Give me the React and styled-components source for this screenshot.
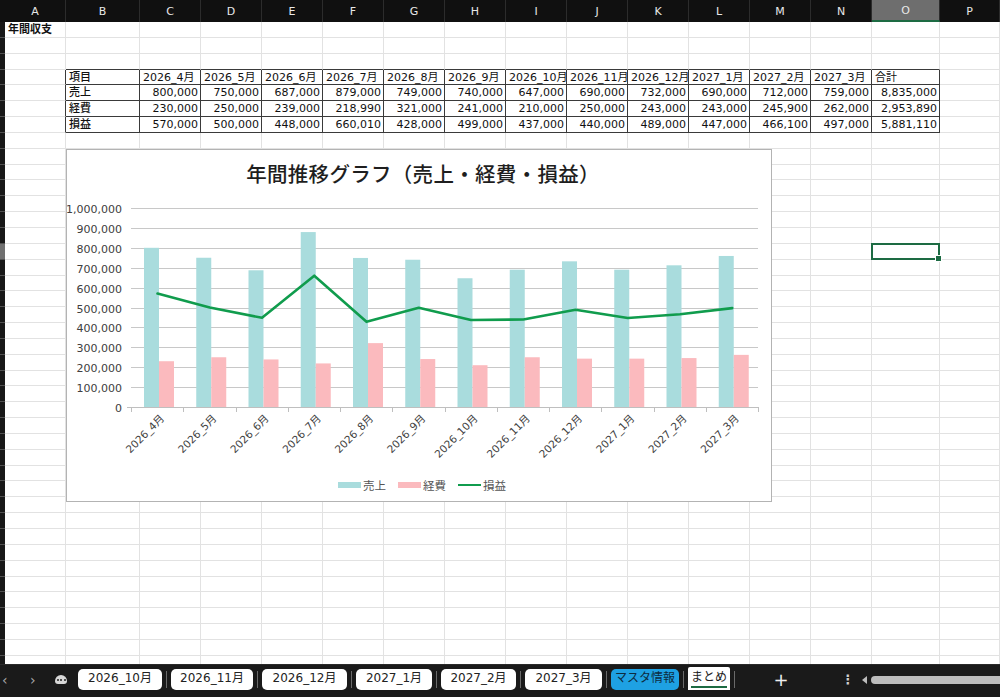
import React from 'react';
import styled, { createGlobalStyle } from 'styled-components';

const GlobalStyle = createGlobalStyle`
  html, body { margin: 0; padding: 0; background: #fff; }
  body { font-family: "DejaVu Sans", "Noto Sans CJK JP", sans-serif; }
  #root { width: 1000px; height: 697px; }
`;

const FONT = `"DejaVu Sans", "Noto Sans CJK JP", sans-serif`;
const JFONT = `"Noto Sans CJK JP", "DejaVu Sans", sans-serif`;

const COLS = ['A', 'B', 'C', 'D', 'E', 'F', 'G', 'H', 'I', 'J', 'K', 'L', 'M', 'N', 'O', 'P'];
const COL_W = [61, 74, 61, 61, 61, 61, 61, 61, 61, 61, 61, 61, 61, 61, 68, 60];
const ROW_H = 15.85;
const ROWS = 41;
const ACTIVE_COL = 14;
const ACTIVE_ROW = 14;

const months = ['2026_4月', '2026_5月', '2026_6月', '2026_7月', '2026_8月', '2026_9月', '2026_10月', '2026_11月', '2026_12月', '2027_1月', '2027_2月', '2027_3月'];
const sales = [800000, 750000, 687000, 879000, 749000, 740000, 647000, 690000, 732000, 690000, 712000, 759000];
const costs = [230000, 250000, 239000, 218990, 321000, 241000, 210000, 250000, 243000, 243000, 245900, 262000];
const profit = [570000, 500000, 448000, 660010, 428000, 499000, 437000, 440000, 489000, 447000, 466100, 497000];
const fmt = (n) => n.toLocaleString('en-US');
const sum = (a) => a.reduce((s, v) => s + v, 0);

const tableRows = [
  { label: '項目', values: [...months, '合計'], header: true },
  { label: '売上', values: [...sales.map(fmt), fmt(sum(sales))] },
  { label: '経費', values: [...costs.map(fmt), fmt(sum(costs))] },
  { label: '損益', values: [...profit.map(fmt), fmt(sum(profit))] },
];

/* ---------- layout ---------- */
const Page = styled.div`
  width: 1000px;
  height: 697px;
  display: flex;
  flex-direction: column;
  overflow: hidden;
  background: #fff;
`;

const HeaderBar = styled.div`
  display: flex;
  height: 22px;
  flex-shrink: 0;
  background: #101010;
`;

const Corner = styled.div`
  width: 5px;
  flex-shrink: 0;
  background: #101010;
`;

const ColHead = styled.div`
  width: ${(p) => p.$w}px;
  flex-shrink: 0;
  box-sizing: border-box;
  display: flex;
  align-items: center;
  justify-content: center;
  color: #e8e8e8;
  font: 11px ${FONT};
  border-right: 1px solid #2c2c2c;
  background: ${(p) => (p.$active ? '#6e6e6e' : 'transparent')};
  border-bottom: ${(p) => (p.$active ? '2px solid #1d6b43' : 'none')};
`;

const Body = styled.div`
  flex: 1;
  display: flex;
  overflow: hidden;
  border-bottom: 1px solid #2a2a2a;
`;

const RowHeads = styled.div`
  width: 5px;
  flex-shrink: 0;
  display: grid;
  grid-auto-rows: ${ROW_H}px;
  background: #181818;
`;

const RowHead = styled.div`
  box-sizing: border-box;
  border-bottom: 1px solid #505050;
  background: ${(p) => (p.$active ? '#707070' : 'transparent')};
`;

const SheetArea = styled.div`
  position: relative;
  flex: 1;
  overflow: hidden;
`;

const Grid = styled.div`
  display: grid;
  grid-template-columns: ${COL_W.map((w) => `${w}px`).join(' ')};
  grid-auto-rows: ${ROW_H}px;
`;

const Cell = styled.div`
  box-sizing: border-box;
  border-right: 1px solid ${(p) => (p.$darkRight ? '#3a3a3a' : '#e2e2e2')};
  border-bottom: 1px solid ${(p) => (p.$darkBottom ? '#3a3a3a' : '#e2e2e2')};
  padding: 0 2px 0 3px;
  font: ${(p) => (p.$weight || 400)} 11px ${FONT};
  line-height: 15px;
  color: #111;
  text-align: ${(p) => p.$align || 'left'};
  white-space: nowrap;
  overflow: hidden;
`;

const Selection = styled.div`
  position: absolute;
  left: ${(p) => p.$left}px;
  top: ${(p) => p.$top}px;
  width: ${(p) => p.$w}px;
  height: ${(p) => p.$h}px;
  box-sizing: border-box;
  border: 2px solid #1d6b43;
  pointer-events: none;
`;

const Handle = styled.div`
  position: absolute;
  right: -4px;
  bottom: -4px;
  width: 5px;
  height: 5px;
  background: #1d6b43;
  border: 1px solid #fff;
`;

/* ---------- chart ---------- */
const ChartBox = styled.div`
  position: absolute;
  left: 61px;
  top: 127px;
  width: 706px;
  height: 353px;
  box-sizing: border-box;
  background: #fff;
  border: 1px solid #b3b3b3;
  display: flex;
  flex-direction: column;
`;

const ChartTitle = styled.div`
  height: 46px;
  display: flex;
  align-items: center;
  justify-content: center;
  padding-left: 8px;
  font: 500 20.5px ${JFONT};
  color: #1e1e1e;
  letter-spacing: 0.3px;
`;

const Plot = styled.svg`
  display: block;
  width: 704px;
  height: 274px;
`;

const Legend = styled.div`
  height: 30px;
  display: flex;
  align-items: center;
  justify-content: center;
  gap: 12px;
  padding-left: 6px;
`;

const LegendItem = styled.div`
  display: flex;
  align-items: center;
  gap: 2px;
  font: 11.5px ${JFONT};
  color: #555;
`;

const Swatch = styled.span`
  display: inline-block;
  width: 23px;
  height: ${(p) => (p.$line ? '2.5px' : '6px')};
  background: ${(p) => p.$color};
`;

const TEAL = '#a9dcdd';
const PINK = '#fbbabe';
const GREEN = '#109c4d';

const PX0 = 64;
const CAT_W = 52.25;
const Y0 = 211;
const SCALE = 199 / 1000000;

function Chart() {
  const ys = Array.from({ length: 11 }, (_, k) => k);
  const linePts = profit
    .map((v, i) => `${PX0 + i * CAT_W + 26.5},${Y0 - v * SCALE}`)
    .join(' ');
  return (
    <ChartBox>
      <ChartTitle>年間推移グラフ（売上・経費・損益）</ChartTitle>
      <Plot viewBox="0 0 704 274">
        {ys.map((k) => {
          const y = Math.round(Y0 - k * 19.9) + 0.5;
          return (
            <g key={k}>
              <line x1={k === 0 ? 60 : PX0} x2={691} y1={y} y2={y} stroke={k === 0 ? '#bfbfbf' : '#c8c8c8'} strokeWidth="1" />
              <text x="55" y={y + 4} textAnchor="end" fontSize="11" fill="#404040" fontFamily='"DejaVu Sans", sans-serif'>
                {fmt(k * 100000)}
              </text>
            </g>
          );
        })}
        {Array.from({ length: 13 }, (_, i) => {
          const x = Math.round(PX0 + i * CAT_W) + 0.5;
          return <line key={i} x1={x} x2={x} y1={Y0} y2={Y0 + 5} stroke="#bfbfbf" strokeWidth="1" />;
        })}
        {sales.map((v, i) => {
          const x = PX0 + i * CAT_W + 13;
          const hs = v * SCALE;
          const hc = costs[i] * SCALE;
          return (
            <g key={i}>
              <rect x={x} y={Y0 - hs} width="15" height={hs} fill={TEAL} />
              <rect x={x + 15} y={Y0 - hc} width="15" height={hc} fill={PINK} />
            </g>
          );
        })}
        <polyline points={linePts} fill="none" stroke={GREEN} strokeWidth="2.6" strokeLinejoin="round" strokeLinecap="round" />
        {months.map((m, i) => {
          const x = PX0 + i * CAT_W + 34;
          const y = Y0 + 12;
          return (
            <text
              key={m}
              x={x}
              y={y}
              textAnchor="end"
              fontSize="10.5"
              fill="#404040"
              fontFamily='"DejaVu Sans", "Noto Sans CJK JP", sans-serif'
              transform={`rotate(-45 ${x} ${y})`}
            >
              {m}
            </text>
          );
        })}
      </Plot>
      <Legend>
        <LegendItem><Swatch $color={TEAL} />売上</LegendItem>
        <LegendItem><Swatch $color={PINK} />経費</LegendItem>
        <LegendItem><Swatch $color={GREEN} $line />損益</LegendItem>
      </Legend>
    </ChartBox>
  );
}

/* ---------- tab bar ---------- */
const TabBar = styled.div`
  height: 32px;
  flex-shrink: 0;
  box-sizing: border-box;
  background: #1a1a1a;
  display: flex;
  align-items: flex-start;
  padding-top: 4px;
`;

const Nav = styled.div`
  width: 78px;
  height: 21px;
  flex-shrink: 0;
  display: flex;
  align-items: center;
`;

const NavArrow = styled.span`
  width: ${(p) => p.$w}px;
  flex-shrink: 0;
  color: #a8a8a8;
  font: 14px ${FONT};
  text-align: left;
  padding-left: ${(p) => p.$pad || 0}px;
`;

const MoreDots = styled.span`
  width: 12px;
  height: 9px;
  margin-left: 1px;
  border-radius: 6px 6px 3px 3px;
  background: #d8d8d8;
  display: flex;
  align-items: center;
  justify-content: center;
  gap: 1.5px;
  & > i {
    width: 2px;
    height: 2px;
    background: #222;
    border-radius: 50%;
  }
`;

const Tab = styled.div`
  width: ${(p) => p.$w}px;
  height: ${(p) => (p.$current ? 23 : 21)}px;
  margin-top: ${(p) => (p.$current ? -2 : 0)}px;
  flex-shrink: 0;
  box-sizing: border-box;
  display: flex;
  align-items: center;
  justify-content: center;
  border-radius: ${(p) => (p.$current ? '2px 2px 0 0' : '5px')};
  background: ${(p) => (p.$blue ? '#1ea1e3' : '#fff')};
  color: ${(p) => (p.$blue ? '#0d2c40' : '#222')};
  font: 12px ${FONT};
  white-space: nowrap;
`;

const TabLabel = styled.span`
  padding-bottom: 1px;
  border-bottom: 2px solid ${(p) => (p.$current ? '#1d6b43' : 'transparent')};
  line-height: 15px;
`;

const TabSep = styled.div`
  width: 1px;
  height: 17px;
  margin: 2px 4px 0;
  flex-shrink: 0;
  background: #6a6a6a;
`;

const PlusBtn = styled.div`
  width: 84px;
  height: 21px;
  flex-shrink: 0;
  display: flex;
  align-items: center;
  justify-content: center;
  color: #eee;
  font: 18px ${FONT};
`;

const Kebab = styled.div`
  width: 14px;
  height: 21px;
  margin-left: 18px;
  flex-shrink: 0;
  display: flex;
  align-items: center;
  justify-content: center;
  color: #cfcfcf;
  font: bold 13px ${FONT};
`;

const ScrollArea = styled.div`
  flex: 1;
  height: 21px;
  display: flex;
  align-items: center;
  margin-left: 7px;
  gap: 4px;
`;

const ScrollLeft = styled.span`
  width: 0;
  height: 0;
  border-top: 4px solid transparent;
  border-bottom: 4px solid transparent;
  border-right: 5px solid #bdbdbd;
  flex-shrink: 0;
`;

const ScrollThumb = styled.div`
  flex: 1;
  height: 8px;
  border-radius: 4px 0 0 4px;
  background: #bdbdbd;
`;

const tabs = [
  { name: '2026_10月', w: 84 },
  { name: '2026_11月', w: 82 },
  { name: '2026_12月', w: 85 },
  { name: '2027_1月', w: 76 },
  { name: '2027_2月', w: 75 },
  { name: '2027_3月', w: 77 },
  { name: 'マスタ情報', w: 68, blue: true },
  { name: 'まとめ', w: 42, current: true },
];

function buildCells() {
  const cells = [];
  for (let r = 0; r < ROWS; r++) {
    for (let c = 0; c < COLS.length; c++) {
      let text = '';
      let align = 'left';
      let weight = 400;
      if (r === 0 && c === 0) {
        text = '年間収支';
        weight = 700;
      }
      const tr = r - 3;
      if (tr >= 0 && tr < 4 && c >= 1 && c <= 14) {
        const row = tableRows[tr];
        if (c === 1) {
          text = row.label;
          weight = 500;
        } else {
          text = row.values[c - 2];
          align = row.header ? 'left' : 'right';
        }
      }
      const inTable = r >= 3 && r <= 6;
      const darkBottom = (inTable || r === 2) && c >= 1 && c <= 14;
      const darkRight = inTable && c >= 0 && c <= 14;
      cells.push(
        <Cell key={`${r}-${c}`} $align={align} $weight={weight} $darkBottom={darkBottom} $darkRight={darkRight}>
          {text}
        </Cell>
      );
    }
  }
  return cells;
}

export default function App() {
  const selLeft = COL_W.slice(0, ACTIVE_COL).reduce((s, w) => s + w, 0) - 1;
  const selTop = ACTIVE_ROW * ROW_H - 1;
  return (
    <>
      <GlobalStyle />
      <Page>
        <HeaderBar>
          <Corner />
          {COLS.map((c, i) => (
            <ColHead key={c} $w={COL_W[i]} $active={i === ACTIVE_COL}>{c}</ColHead>
          ))}
        </HeaderBar>
        <Body>
          <RowHeads>
            {Array.from({ length: ROWS }, (_, r) => (
              <RowHead key={r} $active={r === ACTIVE_ROW} />
            ))}
          </RowHeads>
          <SheetArea>
            <Grid>{buildCells()}</Grid>
            <Chart />
            <Selection $left={selLeft} $top={selTop} $w={COL_W[ACTIVE_COL] + 1} $h={ROW_H + 1}>
              <Handle />
            </Selection>
          </SheetArea>
        </Body>
        <TabBar>
          <Nav>
            <NavArrow $w={28} $pad={2}>‹</NavArrow>
            <NavArrow $w={24}>›</NavArrow>
            <MoreDots><i /><i /><i /></MoreDots>
          </Nav>
          {tabs.map((t, i) => (
            <React.Fragment key={t.name}>
              {i > 0 && <TabSep />}
              <Tab $w={t.w} $blue={t.blue} $current={t.current}>
                <TabLabel $current={t.current}>{t.name}</TabLabel>
              </Tab>
            </React.Fragment>
          ))}
          <TabSep />
          <PlusBtn>+</PlusBtn>
          <Kebab>⋮</Kebab>
          <ScrollArea>
            <ScrollLeft />
            <ScrollThumb />
          </ScrollArea>
        </TabBar>
      </Page>
    </>
  );
}
